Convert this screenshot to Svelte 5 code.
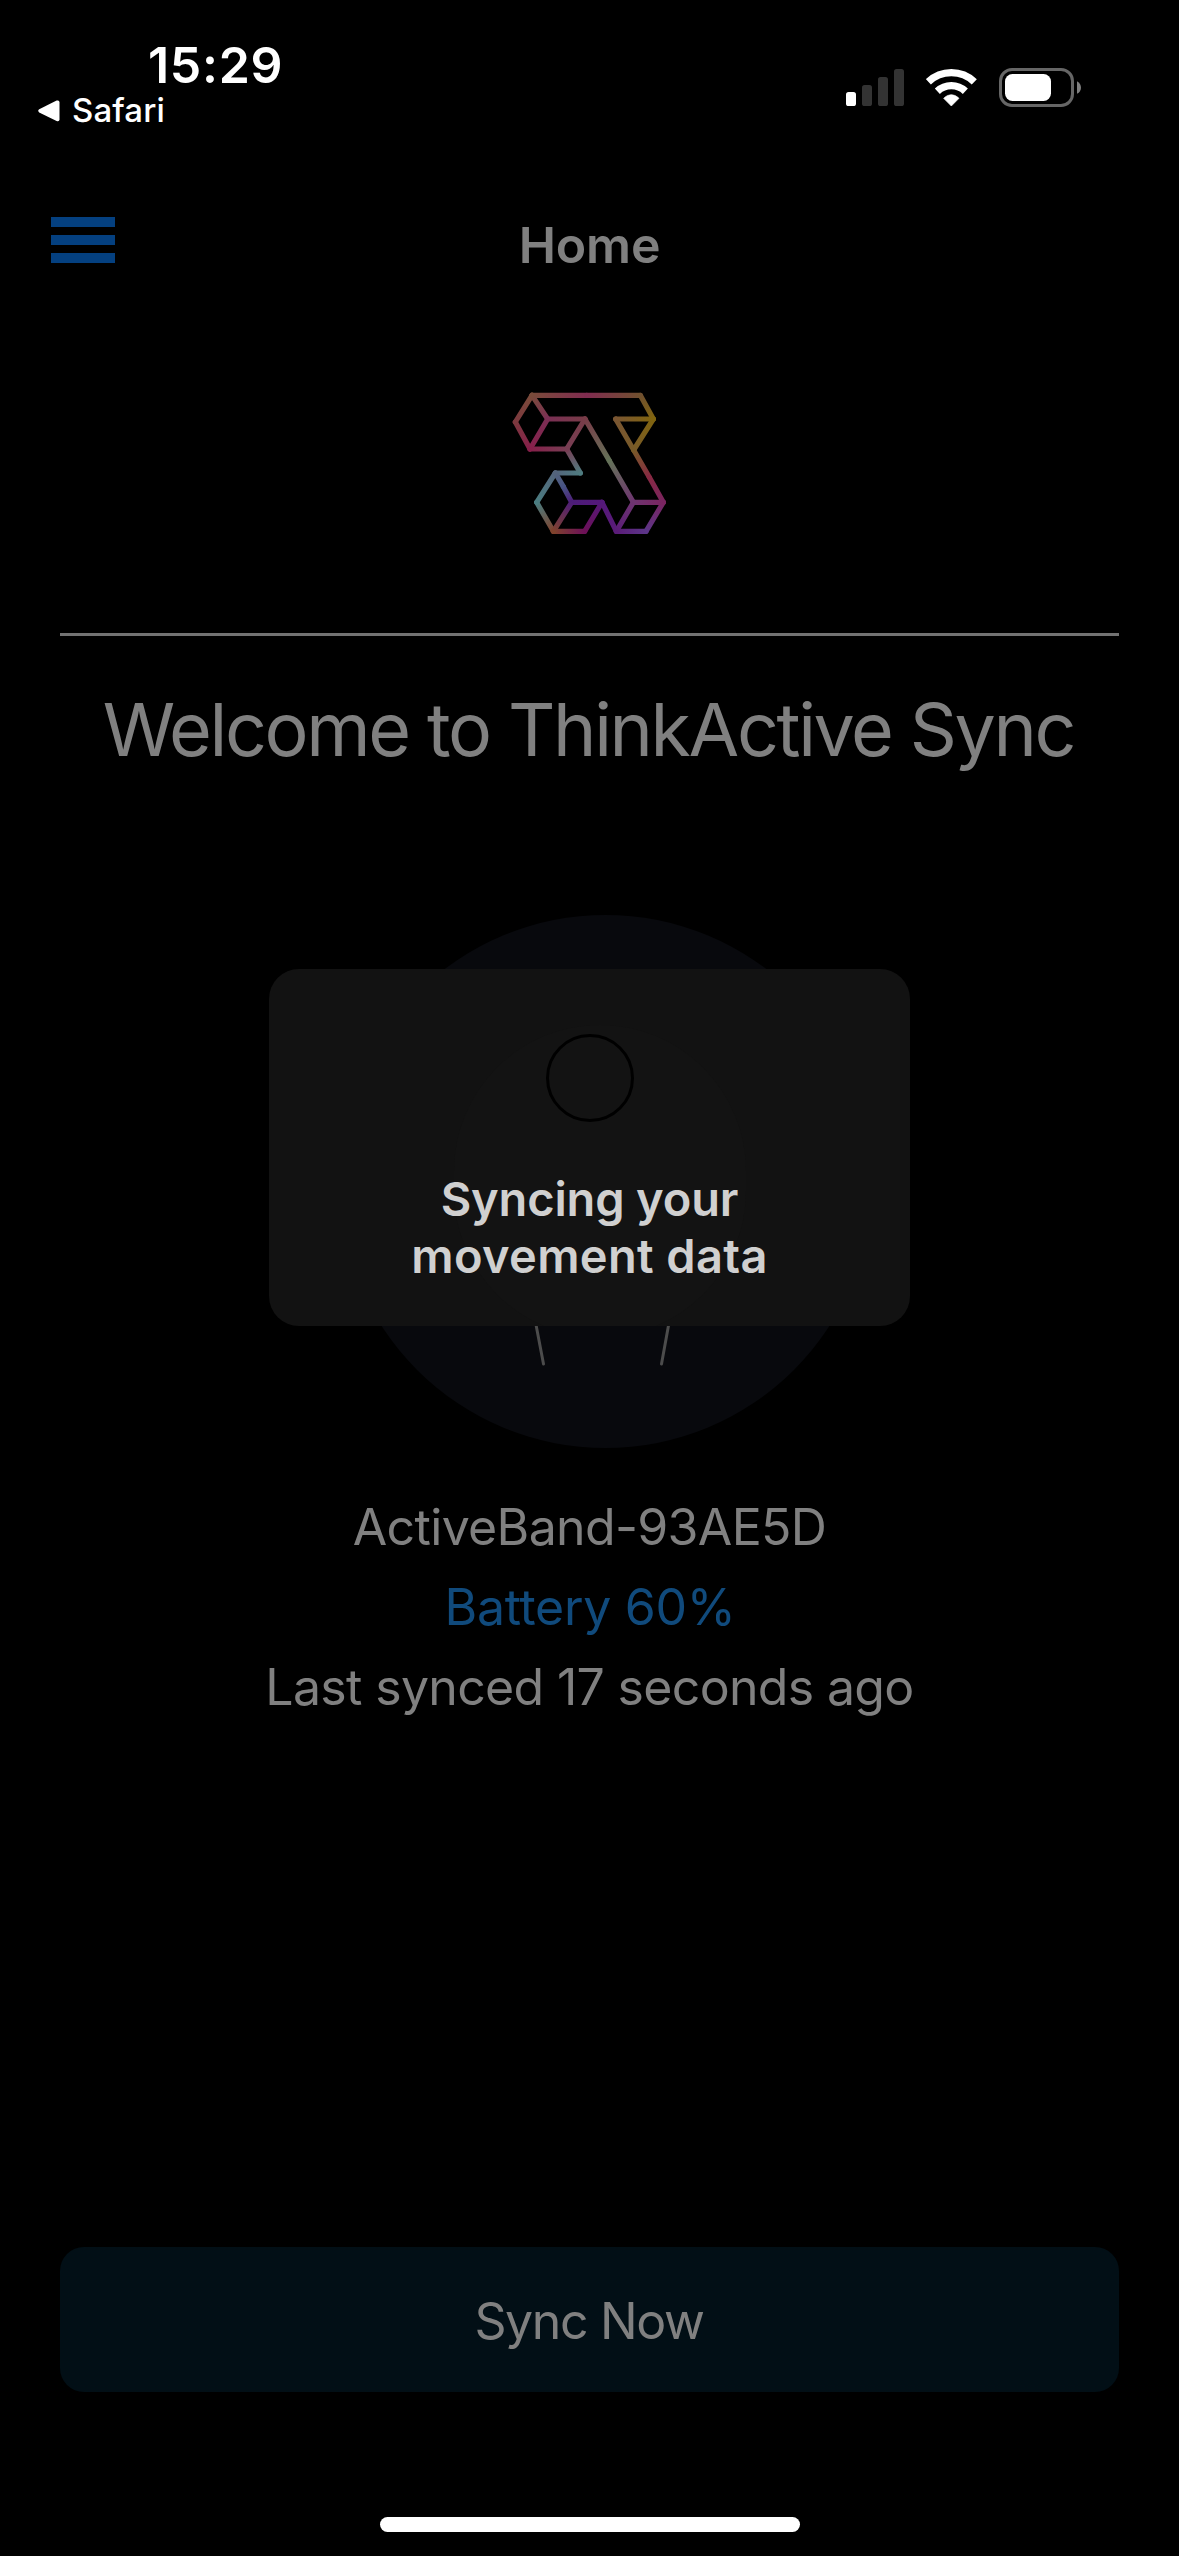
<script>
  // Vertices of the logo outline: x, y, colour
  const points = {
    A: [126, 76, '#7a4b3a'], B: [451, 76, '#70502f'], C: [490, 147, '#80640f'],
    D: [377, 147, '#7a5632'], E: [431, 240, '#785a28'], X: [478, 322, '#862942'],
    F: [520, 397, '#7a2460'], G: [468, 484, '#5c3588'], H: [379, 484, '#5a1c78'],
    I: [336, 397, '#54187a'], J: [284, 484, '#6c1058'], K: [190, 484, '#80422c'],
    L: [140, 397, '#4a7c80'], M: [196, 309, '#54647c'], N: [271, 309, '#4e7c80'],
    O: [230, 237, '#783e54'], P: [120, 237, '#861f4a'], Q: [76, 156, '#7c383e'],
    R: [173, 147, '#7a2f54'], S: [285, 147, '#783c48'], Y: [358, 272, '#647258'],
    T: [430, 397, '#6e3470'], U: [245, 397, '#4c1c78'], V: [220, 350, '#485484'],
    W: [290, 76, '#802c50']
  };
  const segments = 'AW WB BC CD DE CE EX XF FG GH HI IJ JK KL LM MN NO OP PQ QA AR RS RP SO SY YT TF TH MV VU UI UK'
    .split(' ')
    .map((id) => ({ id, a: points[id[0]], b: points[id[1]] }));
</script>

<div class="screen">
  <header class="status">
    <div class="status-left">
      <div class="time">15:29</div>
      <div class="back">
        <svg width="22" height="22" viewBox="0 0 22 22"><path d="M1.2 9.2 18.6.6Q21.5-.3 21.5 2.4V19.2Q21.500 22 18.600 21L1.200 12.400Q-.8 10.800 1.200 9.200Z" fill="#fff" /></svg>
        <span>Safari</span>
      </div>
    </div>
    <div class="status-icons">
      <svg width="58" height="40" viewBox="0 0 58 40">
        <rect x="0" y="24" width="10" height="14" rx="2.600" fill="#fff" />
        <rect x="16" y="17" width="10" height="21" rx="2.600" fill="#333" />
        <rect x="32" y="9" width="10" height="29" rx="2.600" fill="#333" />
        <rect x="48" y="1" width="10" height="37" rx="2.600" fill="#333" />
      </svg>
      <svg width="51" height="40" viewBox="318 84 153 120">
        <g fill="none" stroke="#fff">
          <path d="M325.100 125.500A100 100 0 0 1 462.900 125.500" stroke-width="22" />
          <path d="M352 153.800A61 61 0 0 1 436 153.800" stroke-width="22" />
        </g>
        <path d="M394 198 371 175Q381 164 394 164T417 175Z" fill="#fff" stroke="#fff" stroke-width="2" stroke-linejoin="round" />
      </svg>
      <svg width="83" height="40" viewBox="0 0 83 40">
        <rect x="1.500" y="1.500" width="72" height="36" rx="11.500" fill="none" stroke="#666" stroke-width="3" />
        <rect x="6" y="6" width="46" height="27" rx="7.500" fill="#fff" />
        <path d="M78 13.200C83.300 15.600 83.300 23.400 78 25.800Z" fill="#808080" />
      </svg>
    </div>
  </header>

  <nav>
    <div class="menu"><i></i><i></i><i></i></div>
    <h1>Home</h1>
  </nav>

  <main>
    <svg class="logo" width="200" height="180" viewBox="0 0 600 540">
      <defs>
        {#each segments as s}
          <linearGradient id={'seg' + s.id} gradientUnits="userSpaceOnUse" x1={s.a[0]} y1={s.a[1]} x2={s.b[0]} y2={s.b[1]}>
            <stop offset="0" stop-color={s.a[2]} />
            <stop offset="1" stop-color={s.b[2]} />
          </linearGradient>
        {/each}
      </defs>
      {#each segments as s}
        <path d={`M${s.a[0]} ${s.a[1]}L${s.b[0]} ${s.b[1]}`} stroke={`url(#seg${s.id})`} stroke-width="15.500" stroke-linecap="round" />
      {/each}
    </svg>
    <hr />
    <h2>Welcome to ThinkActive Sync</h2>

    <div class="device">
      <svg width="533" height="533" viewBox="0 0 533 533">
        <circle cx="266.500" cy="266.500" r="266.500" fill="#08090d" />
        <path d="M194 394 204.500 449M332.500 394 322.500 449" fill="none" stroke="#4c4c4c" stroke-width="3" stroke-linecap="round" />
      </svg>
    </div>

    <div class="info">
      <p class="name">ActiveBand-93AE5D</p>
      <p class="battery">Battery 60%</p>
      <p class="synced">Last synced 17 seconds ago</p>
    </div>

    <button>Sync Now</button>
  </main>

  <div class="indicator"></div>

  <div class="overlay">
    <div class="dialog">
      <div class="spinner"></div>
      <p><span class="line1">Syncing your</span><br /><span class="line2">movement data</span></p>
    </div>
  </div>
</div>

<style>
  :global(body) { background: #000; }
  .screen {
    position: relative;
    display: flex;
    flex-direction: column;
    box-sizing: border-box;
    width: 1179px;
    height: 2556px;
    overflow: hidden;
    background: #000;
    color: #808080;
    font-family: Inter, "Liberation Sans", sans-serif;
  }
  svg { display: block; flex: none; }
  h1, h2, p { margin: 0; font-weight: 400; }
  .status {
    display: flex;
    justify-content: space-between;
    box-sizing: border-box;
    height: 140px;
    padding: 40px 97px 0 38px;
    color: #fff;
  }
  .time { padding-left: 110px; font-size: 50px; line-height: 50px; font-weight: 600; letter-spacing: 0.7px; }
  .back { display: flex; align-items: center; gap: 12px; height: 41px; font-size: 33px; line-height: 41px; font-weight: 500; letter-spacing: 0.1px; }
  .status-icons { display: flex; gap: 22px; padding-top: 28px; }
  nav {
    display: grid;
    grid-template-columns: 128px 1fr 128px;
    align-items: center;
    height: 210px;
    padding: 0 51px;
    width: 1077px;
  }
  .menu { display: flex; flex-direction: column; gap: 8px; width: 64px; padding-bottom: 10px; }
  .menu i { height: 10px; background: #044080; }
  h1 { text-align: center; font-size: 50px; line-height: 60px; font-weight: 600; letter-spacing: -0.2px; }
  main { display: flex; flex-direction: column; flex: 1; padding: 20px 60px 0; }
  .logo { align-self: center; }
  hr { width: 100%; height: 3px; margin: 83px 0 49px; border: 0; background: #727272; }
  h2 { text-align: center; font-size: 73.5px; line-height: 90px; letter-spacing: -2.38px; white-space: nowrap; padding-right: 2px; }
  .device { display: flex; justify-content: center; padding: 140px 0 0 31px; }
  .info { display: flex; flex-direction: column; align-items: center; margin-top: 39px; font-size: 50px; line-height: 80px; }
  .name { letter-spacing: -0.66px; }
  .battery { padding-left: 1px; color: #104a7c; letter-spacing: -0.3px; }
  .synced { letter-spacing: -0.67px; }
  button {
    margin: auto 0 125px;
    height: 145px;
    padding: 2px 1px 0 0;
    border: 0;
    border-radius: 24px;
    background: #020f16;
    color: #808080;
    font: 400 50px/60px Inter, "Liberation Sans", sans-serif;
    letter-spacing: -1.35px;
  }
  .indicator { align-self: center; width: 420px; height: 15px; margin-bottom: 24px; border-radius: 8px; background: #fff; }
  .overlay { position: absolute; inset: 0; display: flex; justify-content: center; align-items: flex-start; padding-top: 969px; }
  .dialog {
    position: relative;
    display: flex;
    flex-direction: column;
    align-items: center;
    box-sizing: border-box;
    width: 641px;
    height: 357px;
    padding-top: 65px;
    overflow: hidden;
    border-radius: 30px;
    background: #121212;
    color: #d0d0d0;
    text-align: center;
  }
  .dialog::before { content: ''; position: absolute; left: 185px; top: 56px; width: 292px; height: 312px; border-radius: 146px; background: #131313; }
  .spinner { position: relative; box-sizing: border-box; width: 88px; height: 88px; border: 3px solid #000; border-radius: 50%; }
  .dialog p { position: relative; margin-top: 48px; font-size: 47px; line-height: 57px; font-weight: 600; }
  .line1 { letter-spacing: -0.15px; }
  .line2 { letter-spacing: 0.35px; }
</style>
